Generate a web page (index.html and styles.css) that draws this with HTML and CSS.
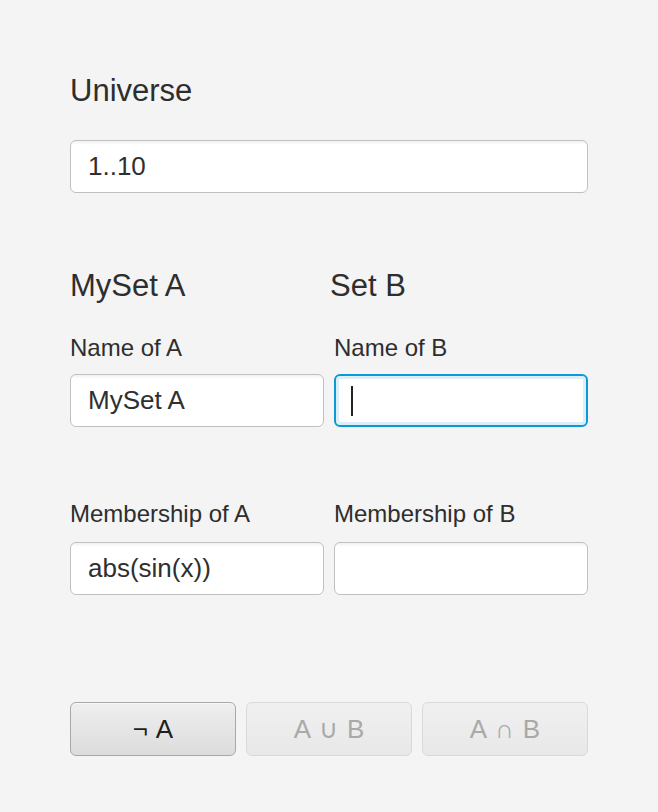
FILE: index.html
```html
<!DOCTYPE html>
<html>
<head>
<meta charset="utf-8">
<link rel="stylesheet" href="styles.css">
</head>
<body>
<div class="page">
  <div class="heading universe-heading">Universe</div>
  <div class="field universe-field"><span class="value">1..10</span></div>

  <div class="sets">
    <div class="set">
      <div class="heading set-heading">MySet A</div>
      <div class="label name-label">Name of A</div>
      <div class="field"><span class="value">MySet A</span></div>
      <div class="label member-label">Membership of A</div>
      <div class="field"><span class="value">abs(sin(x))</span></div>
    </div>
    <div class="set">
      <div class="heading set-heading set-heading-b">Set B</div>
      <div class="label name-label">Name of B</div>
      <div class="field focused"><span class="caret"></span></div>
      <div class="label member-label">Membership of B</div>
      <div class="field"><span class="value"></span></div>
    </div>
  </div>

  <div class="buttons">
    <div class="btn">¬ A</div>
    <div class="btn disabled">A ∪ B</div>
    <div class="btn disabled">A ∩ B</div>
  </div>
</div>
</body>
</html>
```

FILE: styles.css
```css
html, body {
  margin: 0;
  padding: 0;
  background: #f4f4f4;
}

body {
  font-family: "Liberation Sans", Arial, sans-serif;
  color: #333333;
}

.page {
  width: 518px;
  padding: 73px 70px 0 70px;
}

.heading {
  font-size: 31px;
  line-height: 36px;
  color: #2e2e2e;
}

.set-heading-b {
  margin-left: -4px;
}

.universe-field {
  margin-top: 31px;
}

.field {
  box-sizing: border-box;
  height: 53px;
  border: 1px solid #c0c0c0;
  border-radius: 6px;
  background: linear-gradient(to bottom, #f1f1f1 0px, #ffffff 4px, #ffffff 100%);
  display: flex;
  align-items: center;
  padding-left: 17px;
  font-size: 26px;
  color: #2f2f2f;
}

.field.focused {
  border: 2px solid #0a9bd6;
  box-shadow: inset 0 0 0 3px #dceff8;
  background: #ffffff;
  padding-left: 15px;
}

.caret {
  display: block;
  width: 2px;
  height: 30px;
  background: #222222;
}

.sets {
  display: grid;
  grid-template-columns: 1fr 1fr;
  column-gap: 10px;
  margin-top: 75px;
}

.label {
  font-size: 24px;
  line-height: 28px;
  color: #2e2e2e;
}

.name-label {
  margin-top: 30px;
  margin-bottom: 12px;
}

.member-label {
  margin-top: 73px;
  margin-bottom: 14px;
}

.buttons {
  display: grid;
  grid-template-columns: 1fr 1fr 1fr;
  column-gap: 10px;
  margin-top: 107px;
}

.btn {
  box-sizing: border-box;
  height: 54px;
  border: 1px solid #a8a8a8;
  border-radius: 6px;
  background: linear-gradient(to bottom, #efefef, #dcdcdc);
  box-shadow: inset 0 1px 0 #f8f8f8;
  display: flex;
  align-items: center;
  justify-content: center;
  font-size: 26px;
  color: #1f1f1f;
  word-spacing: 2px;
}

.btn.disabled {
  border-color: #d9d9d9;
  background: linear-gradient(to bottom, #f0f0f0, #e8e8e8);
  color: #a9a9a9;
  box-shadow: none;
}
```
